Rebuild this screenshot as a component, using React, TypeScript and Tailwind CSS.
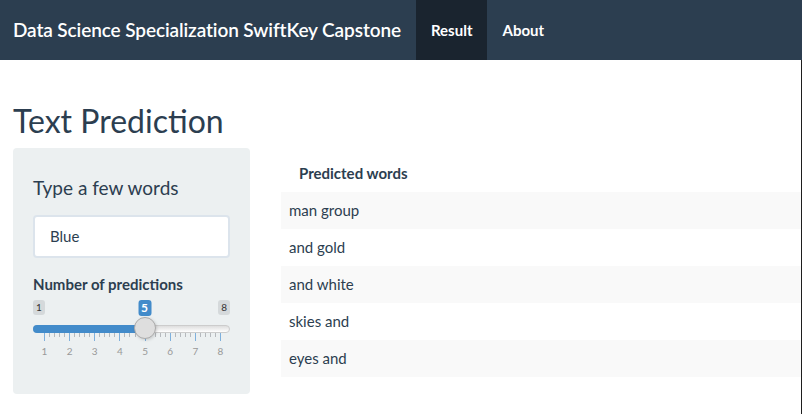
const predictions = ["man group", "and gold", "and white", "skies and", "eyes and"];

const MIN = 1;
const MAX = 8;
const VALUE = 5;
// slider track geometry (px, relative to the slider box)
const GRID_START = 11;
const GRID_STEP = 25.14;

const xFor = (v: number) => GRID_START + (v - MIN) * GRID_STEP;

function RangeSlider() {
  const handleX = xFor(VALUE);
  const ticks: { x: number; major: boolean }[] = [];
  for (let v = MIN; v < MAX; v++) {
    ticks.push({ x: xFor(v), major: true });
    for (let s = 1; s < 5; s++) ticks.push({ x: xFor(v) + (GRID_STEP * s) / 5, major: false });
  }
  ticks.push({ x: xFor(MAX), major: true });

  return (
    <div className="relative mt-[5px] h-[62px] w-[197px]">
      {/* min / max labels */}
      <span className="absolute left-0 top-0 rounded-[3px] bg-[#d5d9db] px-[3px] text-[10px] leading-[15px] text-[#333]">
        {MIN}
      </span>
      <span className="absolute right-0 top-0 rounded-[3px] bg-[#d5d9db] px-[3px] text-[10px] leading-[15px] text-[#333]">
        {MAX}
      </span>
      {/* current value */}
      <span
        className="absolute top-0 -translate-x-1/2 rounded-[3px] bg-[#428bca] px-[3px] text-[12px] font-bold leading-[16px] text-white"
        style={{ left: handleX }}
      >
        {VALUE}
      </span>

      {/* track */}
      <div className="absolute left-0 right-0 top-[25px] h-[8px] rounded-full border border-[#cccccc] bg-gradient-to-b from-[#dedede] to-white" />
      <div
        className="absolute left-0 top-[25px] h-[8px] rounded-l-full bg-[#428bca]"
        style={{ width: handleX }}
      />

      {/* grid */}
      {ticks.map((t, i) => (
        <div
          key={i}
          className={
            t.major
              ? "absolute top-[33px] h-[8px] w-px bg-[#7fb0dc]"
              : "absolute top-[33px] h-[4px] w-px bg-[#b5b9bd]"
          }
          style={{ left: t.x }}
        />
      ))}
      {Array.from({ length: MAX - MIN + 1 }, (_, i) => MIN + i).map((v) => (
        <span
          key={v}
          className="absolute top-[45px] -translate-x-1/2 text-[10px] leading-[12px] text-[#999]"
          style={{ left: xFor(v) + 0.5 }}
        >
          {v}
        </span>
      ))}

      {/* handle */}
      <div
        className="absolute top-[17px] h-[22px] w-[22px] -translate-x-1/2 rounded-full border border-[#ababab] bg-[#dedede] shadow-[1px_1px_3px_rgba(0,0,0,0.15)]"
        style={{ left: handleX + 0.5 }}
      />
    </div>
  );
}

export default function App() {
  return (
    <div
      className="h-[414px] w-[802px] overflow-hidden bg-white text-[15px] text-[#2c3e50]"
      style={{ fontFamily: "Lato, 'Open Sans', sans-serif" }}
    >
      <nav className="flex h-[60px] items-stretch bg-[#2c3e50] text-white">
        <div className="flex items-center pl-[13px] pr-[15px] text-[19px] font-semibold tracking-[-0.1px]">
          Data Science Specialization SwiftKey Capstone
        </div>
        <ul className="flex items-stretch">
          <li className="flex items-center bg-[#1a242f] px-[15px] font-bold">Result</li>
          <li className="flex items-center px-[15px] font-bold">About</li>
        </ul>
      </nav>

      <div className="h-[354px] border-r border-[#1e1e1e] pl-[13px] pt-[43px]">
        <h2 className="mb-[10px] text-[32px] leading-[35px]">Text Prediction</h2>

        <div className="flex gap-[31px]">
          <div className="h-[246px] w-[237px] rounded-[4px] bg-[#ecf0f1] px-[20px] pt-[29px]">
            <h4 className="mb-[17px] text-[19px] leading-[21px]">Type a few words</h4>
            <div className="flex h-[43px] w-[197px] items-center rounded-[4px] border-2 border-[#dce4ec] bg-white px-[15px]">
              Blue
            </div>
            <label className="mt-[16px] block font-bold leading-[21px]">Number of predictions</label>
            <RangeSlider />
          </div>

          <div className="flex-1 pt-[7px]">
            <table className="w-full border-collapse">
              <thead>
                <tr className="h-[37px]">
                  <th className="pl-[18px] text-left font-bold">Predicted words</th>
                </tr>
              </thead>
              <tbody>
                {predictions.map((p, i) => (
                  <tr key={p} className={i % 2 === 0 ? "h-[37px] bg-[#f9f9f9]" : "h-[37px]"}>
                    <td className="pl-[8px]">{p}</td>
                  </tr>
                ))}
              </tbody>
            </table>
          </div>
        </div>
      </div>
    </div>
  );
}
